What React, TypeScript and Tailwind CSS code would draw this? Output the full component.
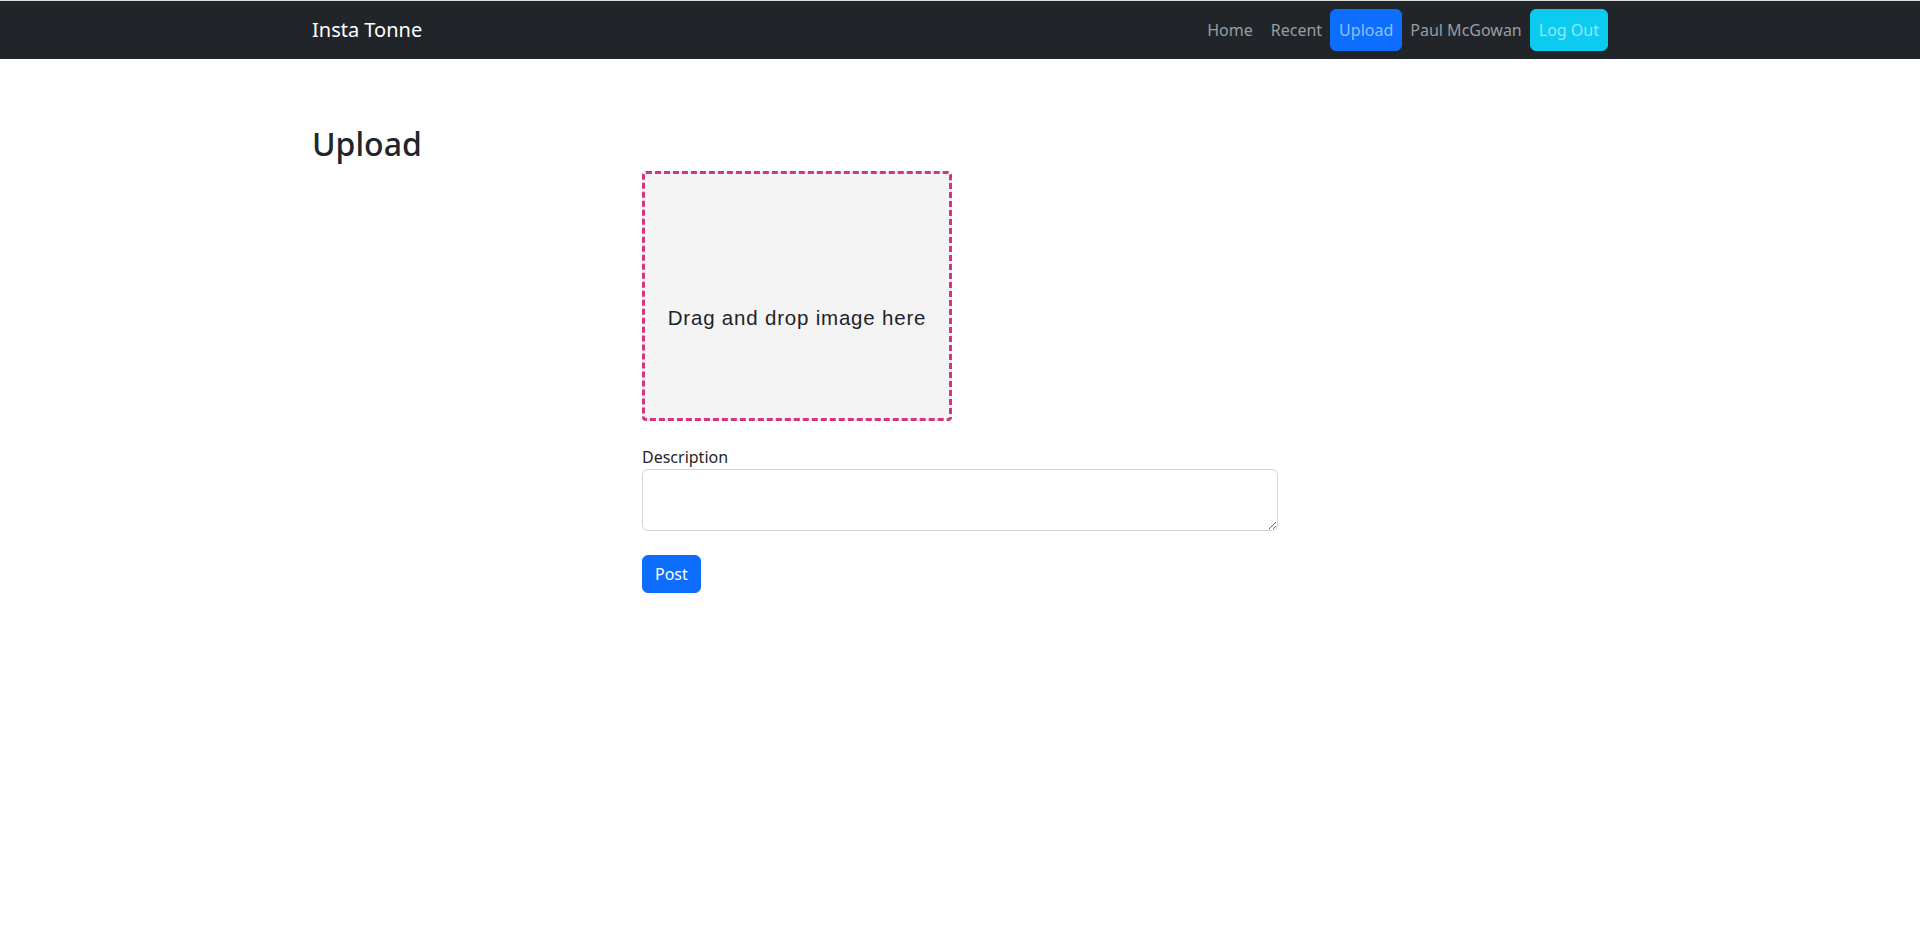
import React from "react";

export default function App() {
  return (
    <div
      className="min-h-[942px] bg-white text-[#212529]"
      style={{ fontFamily: '"Noto Sans", "Open Sans", sans-serif' }}
    >
      <div className="h-px bg-[#dcdcdc]" />
      <nav className="bg-[#212529] py-2">
        <div className="mx-auto flex max-w-[1320px] items-center justify-between px-3">
          <a className="py-[5px] text-[20px] leading-[30px] text-white">Insta Tonne</a>
          <ul className="flex items-center text-base leading-6">
            <li>
              <a className="block py-2 pl-2 pr-[10px] text-[#9a9da0]">Home</a>
            </li>
            <li>
              <a className="block px-2 py-2 text-[#9a9da0]">Recent</a>
            </li>
            <li>
              <a className="block rounded-[6px] border border-[#0d6efd] bg-[#0d6efd] px-2 py-2 text-[#92befe]">
                Upload
              </a>
            </li>
            <li>
              <span className="block px-2 py-2 text-[#9a9da0]">Paul McGowan</span>
            </li>
            <li>
              <a className="block rounded-[6px] border border-[#0dcaf0] bg-[#0dcaf0] px-2 py-2 text-[#92e7f8]">
                Log Out
              </a>
            </li>
          </ul>
        </div>
      </nav>
      <main className="mx-auto max-w-[1320px] px-3 pt-[66px]">
        <h2 className="mb-2 text-[32px] font-medium leading-[1.2]">Upload</h2>
        <div className="grid grid-cols-4 gap-6">
          <form className="col-span-2 col-start-2">
            <div
              className="flex h-[250px] w-[310px] items-center justify-center rounded-[4px] border-[3px] border-dashed border-[#d63384] bg-[#f4f4f4] pt-[43px] text-[20.5px] tracking-[0.8px] text-[#1f2328]"
              style={{ fontFamily: '"Liberation Sans", Arial, sans-serif' }}
            >
              Drag and drop image here
            </div>
            <div className="mt-6">
              <label className="block text-base leading-6">Description</label>
              <textarea
                rows={2}
                className="block w-full rounded-[6px] border border-[#ced4da] px-3 py-1.5 text-base leading-6 outline-none"
              />
            </div>
            <button
              type="button"
              className="mt-6 rounded-[6px] border border-[#0d6efd] bg-[#0d6efd] px-3 py-1.5 text-base leading-6 text-white"
            >
              Post
            </button>
          </form>
        </div>
      </main>
    </div>
  );
}
